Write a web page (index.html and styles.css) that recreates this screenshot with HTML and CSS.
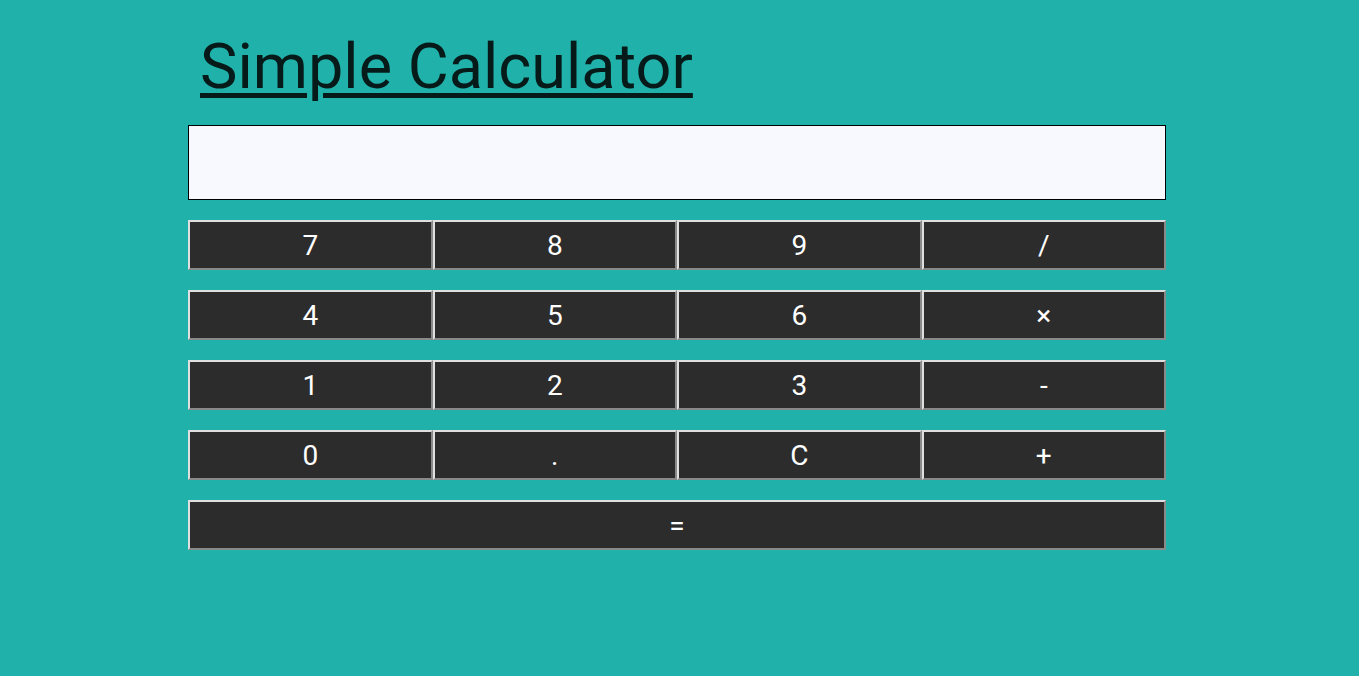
FILE: index.html
```html
<!DOCTYPE html>
<html>
<head>
<meta charset="utf-8">
<link rel="stylesheet" href="styles.css">
</head>
<body>
<div class="calc">
  <h1 class="title">Simple Calculator</h1>
  <input class="display" type="text">
  <div class="keys">
    <button class="key">7</button><button class="key">8</button><button class="key">9</button><button class="key">/</button>
    <button class="key">4</button><button class="key">5</button><button class="key">6</button><button class="key">×</button>
    <button class="key">1</button><button class="key">2</button><button class="key">3</button><button class="key">-</button>
    <button class="key">0</button><button class="key">.</button><button class="key">C</button><button class="key">+</button>
    <button class="key wide">=</button>
  </div>
</div>
</body>
</html>
```
FILE: styles.css
```css
html, body {
  margin: 0;
  padding: 0;
  background: #20b2aa;
  font-family: Roboto, "Liberation Sans", sans-serif;
}
.calc {
  width: 978px;
  margin-left: 188px;
  padding-top: 24px;
}
.title {
  margin: 0 0 0 12px;
  font-size: 63px;
  font-weight: 400;
  line-height: 86px;
  height: 101px;
  color: #061a1a;
  text-decoration: underline;
  text-decoration-thickness: 5px;
  text-underline-offset: 5px;
}
.display {
  display: block;
  box-sizing: border-box;
  width: 978px;
  height: 75px;
  margin: 0 0 20px 0;
  border: 1px solid #000;
  background: #f8f8ff;
  padding: 0 10px;
  font-family: Roboto, sans-serif;
  font-size: 28px;
}
.keys {
  display: grid;
  grid-template-columns: repeat(4, 1fr);
  grid-auto-rows: 50px;
  row-gap: 20px;
}
.key {
  background: #2c2c2c;
  color: #fff;
  font-family: Roboto, sans-serif;
  font-size: 28px;
  border-style: solid;
  border-width: 2px;
  border-color: #e0e0e0 #8a8a8a #8a8a8a #e0e0e0;
  padding: 0;
  margin: 0;
}
.wide {
  grid-column: 1 / -1;
}
```
